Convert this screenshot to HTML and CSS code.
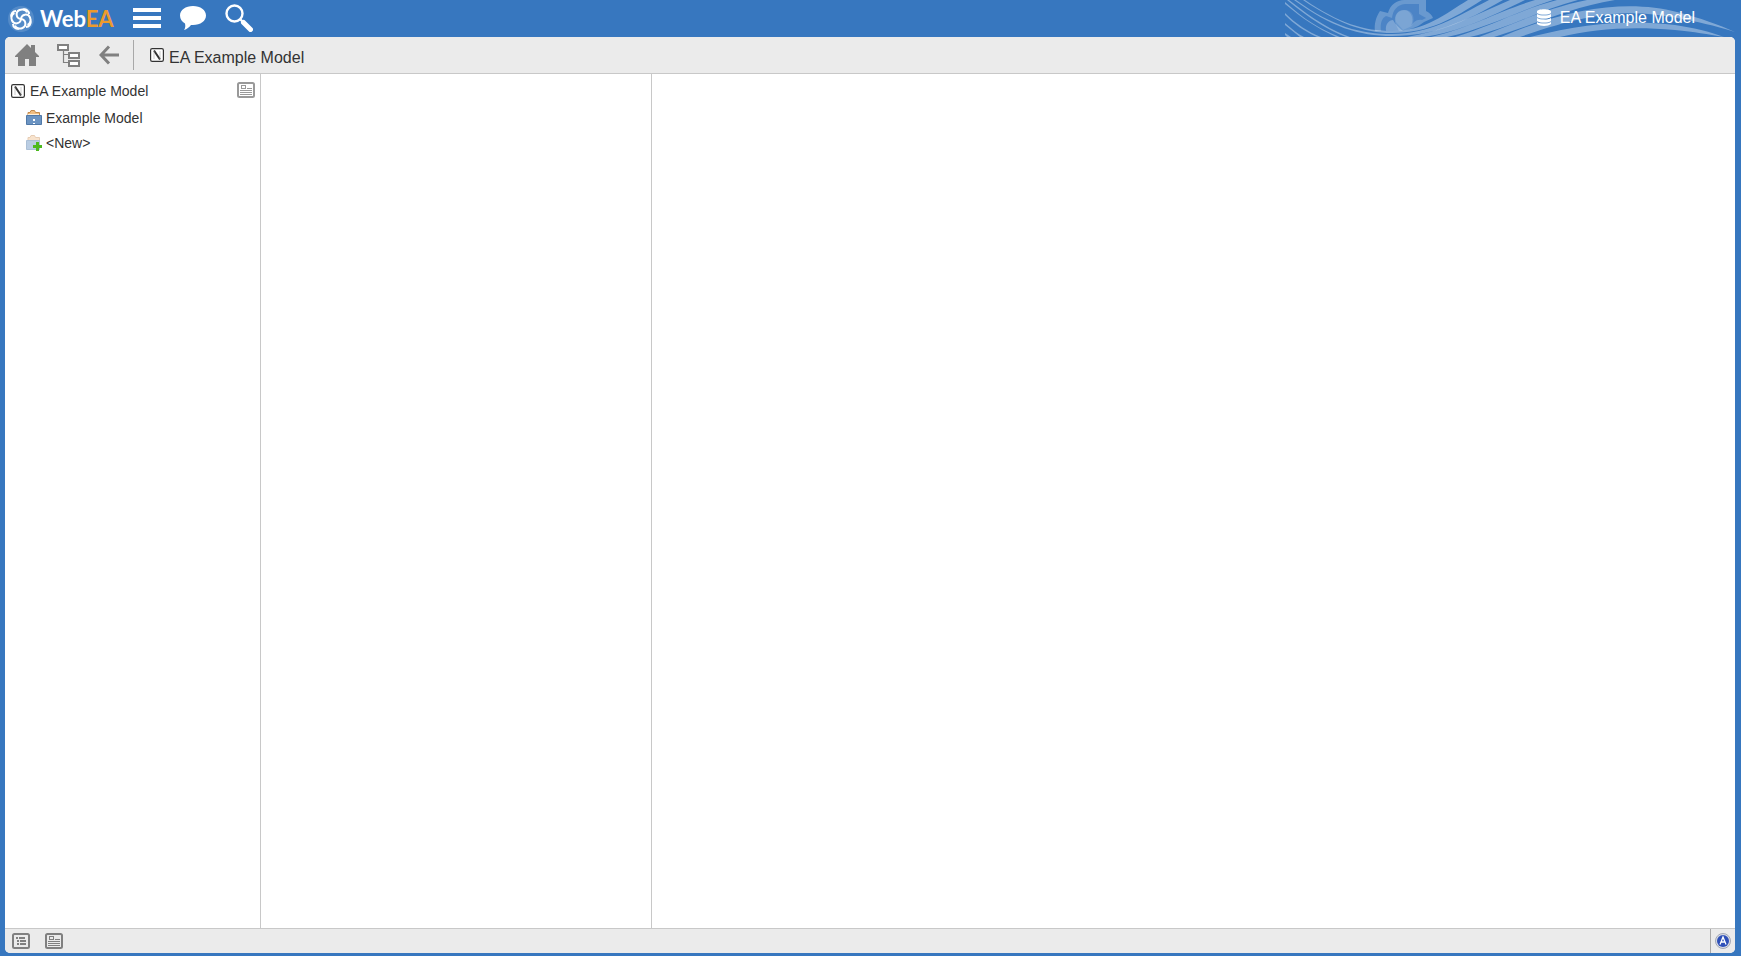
FILE: index.html
```html
<!DOCTYPE html>
<html lang="en">

<head>
    <meta charset="utf-8">
    <title>WebEA - EA Example Model</title>
    <link rel="stylesheet" href="styles.css">
</head>

<body>
    <!-- symbols shared by several parts of the page -->
    <svg class="symbols" aria-hidden="true">
        <symbol id="icon-root" viewBox="0 0 14 14">
            <rect x="0.6" y="0.6" width="12.8" height="12.8" rx="1.6" fill="#fff" stroke="#333" stroke-width="1.2" />
            <path d="M4 2.5L10 11.5" stroke="#333" stroke-width="2" />
            <path d="M4 3V11M10 11V3" stroke="#999" stroke-width="0.5" />
        </symbol>
        <symbol id="icon-props" viewBox="0 0 18 16">
            <rect x="1" y="1" width="16" height="14" rx="1.5" fill="none" stroke="currentColor" stroke-width="2" />
            <rect x="4.5" y="3.5" width="4" height="3" fill="none" stroke="currentColor" />
            <path d="M10 6.5H15M3 8.5H15M3 10.5H15M3 12.5H15" stroke="currentColor" />
        </symbol>
        <symbol id="logo-loop" viewBox="0 0 28 28" fill="none">
            <path d="M14 14C9 13.500 8 7 12.500 5C16 3.500 19 5 20 7.500" />
        </symbol>
    </svg>

    <header class="header">
        <a class="logo" href="#" aria-label="WebEA">
            <svg class="logo-mark" width="28" height="28" viewBox="0 0 28 28" fill="none" stroke="#fff" stroke-width="2">
                <circle cx="14" cy="14" r="13" fill="#fff" fill-opacity="0.15" stroke="none" />
                <use href="#logo-loop" width="28" height="28" />
                <use href="#logo-loop" width="28" height="28" transform="rotate(90 14 14)" />
                <use href="#logo-loop" width="28" height="28" transform="rotate(180 14 14)" />
                <use href="#logo-loop" width="28" height="28" transform="rotate(270 14 14)" />
                <path d="M9 6C6 6 3.500 9 4.500 12M22 9C22 6 19 3.500 16 4.500M19 22C22 22 24.500 19 23.500 16M6 19C6 22 9 24.500 12 23.500" />
            </svg>
            <span class="logo-text">Web<span class="logo-ea">EA</span></span>
        </a>
        <button class="header-button" type="button" aria-label="Menu">
            <svg width="28" height="20" viewBox="0 0 28 20"><path d="M0 2H28M0 10H28M0 18H28" stroke="#fff" stroke-width="4" /></svg>
        </button>
        <button class="header-button" type="button" aria-label="Reviews">
            <svg width="28" height="26" viewBox="0 0 28 26"><path d="M14 1C21.500 1 27 5 27 10.500C27 16 21.500 20 14 20L12 20C10 22.500 8 24 5 25C6.500 23 6.500 21 6 18.500C3 16.800 1 14 1 10.500C1 5 6.500 1 14 1Z" fill="#fff" /></svg>
        </button>
        <button class="header-button" type="button" aria-label="Search">
            <svg width="28" height="28" viewBox="0 0 28 28" fill="none" stroke="#fff"><circle cx="9.500" cy="9.500" r="8" stroke-width="2.400" /><path d="M15 15L18 18" stroke-width="2.400" /><path d="M18.500 18.500L25.500 25.500" stroke-width="5" stroke-linecap="round" /></svg>
        </button>

        <div class="banner">
            <svg class="banner-art" width="450" height="37" viewBox="0 0 450 37" aria-hidden="true">
                <g fill="#fff" fill-opacity="0.36">
                    <path fill-opacity="0.25" d="M90 31C89 24 91 17 95 11L103 13C105 5 112 0 119 0H141V11C145 13 147 15 148 18L139 22C132 28 122 31 107 31H96L90 31Z" />
                    <path fill="#3877c0" fill-opacity="0.6" d="M96 31C95 23 97 18 101 16L107 18C108 10 112 5 120 4H134V14L141 18L137 20C131 19 128 23 126 26C130 17 125 10 119 10C111 10 108 18 111 25L114 31Z" />
                    <path fill-opacity="0.25" d="M101 31C100 24 104 20 108 20C110 24 114 28 118 31Z" />
                    <path fill-opacity="0.12" d="M111 22C109 15 113 10 120 10C127 10 131 17 127 26L118 30Z" />
                    <path d="M20 0C54 23 79 31 107 31C140 31 160 14 183 0H197C168 19 143 33 107 33C79 33 52 23 18 0Z" />
                    <path d="M11 0C48 27 76 34 107 34C145 34 171 17 204 0H218C180 22 150 36 107 36C74 36 46 27 9 0Z" />
                    <path d="M4 0C29 20 48 31 65 37H61C43 30 25 19 2 0ZM122 37C159 31 188 16 225 0H240C205 17 175 32 138 37Z" />
                    <path d="M0 2C20 20 35 29 55 37H51C32 28 18 19 0 4ZM146 37C187 27 214 11 250 0H268C233 11 202 28 162 37Z" />
                    <path d="M0 13C11 24 23 32 36 37H32C19 31 9 24 0 15ZM170 37C207 26 234 10 272 0H293C257 9 223 29 185 37Z" />
                    <path d="M0 23C7 29 13 34 19 37H15L0 25ZM194 37C232 23 258 9 302 0H330C286 7 249 25 209 37Z" />
                    <path d="M0 33L6 37H2L0 35ZM216 37C292 4 349 1 392 12C415 18 435 25 450 32C428 25 413 22 392 18C343 9 307 12 235 37Z" />
                    <path d="M245 37C306 22 349 20 390 25C410 28 426 32 439 37C422 34 410 32 390 30C345 26 309 29 275 37Z" />
                </g>
            </svg>
            <div class="model">
                <svg width="16" height="17" viewBox="0 0 16 17" fill="#fff"><path d="M1 2.500C1 -0.500 15 -0.500 15 2.500V4C12 6 4 6 1 4ZM1 5C4 7 12 7 15 5V8C12 10 4 10 1 8ZM1 9C4 11 12 11 15 9V12C12 14 4 14 1 12ZM1 13C4 15 12 15 15 13V15C12 17.500 4 17.500 1 15Z" /></svg>
                <span>EA Example Model</span>
            </div>
        </div>
    </header>

    <div class="window">
        <nav class="toolbar">
            <button class="tool" type="button" aria-label="Home">
                <svg width="24" height="24" viewBox="0 0 24 24" fill="#808080"><path d="M12 1L16 5V2H20V9L24 13V14H21V23H14V16H10V23H3V14H0V13Z" /></svg>
            </button>
            <button class="tool" type="button" aria-label="Browser">
                <svg width="24" height="24" viewBox="0 0 24 24" fill="none" stroke="#808080"><path d="M6.500 8V19.500H11M6.500 11.500H11" stroke-width="1.200" /><g fill="#fff" stroke-width="2"><rect x="1" y="2" width="10" height="5" /><rect x="12" y="10" width="10" height="5" /><rect x="12" y="18" width="10" height="5" /></g></svg>
            </button>
            <button class="tool" type="button" aria-label="Back">
                <svg width="20" height="20" viewBox="0 0 20 20" fill="none" stroke="#808080" stroke-width="3"><path d="M20 10H2M10 1.500L2 10L10 18.500" /></svg>
            </button>
            <div class="path">
                <svg width="14" height="14"><use href="#icon-root" /></svg>
                <span>EA Example Model</span>
            </div>
        </nav>

        <main class="panes">
            <aside class="tree">
                <div class="tree-row tree-root">
                    <a href="#"><svg width="14" height="14"><use href="#icon-root" /></svg>EA Example Model</a>
                    <button class="tree-props" type="button" aria-label="Properties"><svg width="18" height="16"><use href="#icon-props" /></svg></button>
                </div>
                <div class="tree-row tree-child">
                    <a href="#">
                        <svg width="16" height="16" viewBox="0 0 16 16"><path d="M2 6V2.500H4L5 0.500H8.500L9.500 2.500H13.500V6Z" fill="#f0be82" stroke="#c58b4c" /><path d="M2 4.500H13" stroke="#fff0d8" /><path d="M0.500 5.500H15.500V14.500H0.500Z" fill="#6c94c2" stroke="#5079a8" /><path d="M7 9H9V11H7ZM7 13H9V14H7Z" fill="#fff" /></svg>Example Model</a>
                </div>
                <div class="tree-row tree-child">
                    <a href="#">
                        <svg width="16" height="16" viewBox="0 0 16 16"><path d="M2 6V2.500H4L5 0.500H8.500L9.500 2.500H13.500V6Z" fill="#f8e3cd" stroke="#e6cdb5" /><path d="M0.500 5.500H13.500V14.500H0.500Z" fill="#bacde3" stroke="#acc0d6" /><path d="M10 7H13V10H16V13H13V16H10V13H7V10H10Z" fill="#4cb91d" /></svg>&lt;New&gt;</a>
                </div>
            </aside>
            <section class="list"></section>
            <section class="content"></section>
        </main>

        <footer class="footer">
            <button class="foot-button" type="button" aria-label="List view">
                <svg width="18" height="16" viewBox="0 0 18 16" fill="none" stroke="currentColor"><rect x="1" y="1" width="16" height="14" rx="1.500" stroke-width="2" /><path d="M4 5H6M7 5H13M5 8H7M8 8H14M5 11H7M8 11H14" stroke-width="2" /></svg>
            </button>
            <button class="foot-button" type="button" aria-label="Properties view"><svg width="18" height="16"><use href="#icon-props" /></svg></button>
            <button class="account" type="button" aria-label="Account">
                <svg width="16" height="16" viewBox="0 0 16 16"><circle cx="8" cy="8" r="7.500" fill="#d9dce5" stroke="#a3a8b5" /><circle cx="8" cy="8" r="6" fill="#2e50b8" /><path d="M5 11.500L8 4L11 11.500M6 9H10" fill="none" stroke="#fff" stroke-width="1.300" /></svg>
            </button>
        </footer>
    </div>
</body>

</html>
```

FILE: styles.css
```css
html,
body {
    margin: 0;
    height: 100%;
}

body {
    display: flex;
    flex-direction: column;
    box-sizing: border-box;
    padding: 0 6px 3px 5px;
    background-color: #3777bf;
    color: #333;
    font-family: "Liberation Sans", Arial, sans-serif;
    font-size: 14px;
}

button {
    display: flex;
    padding: 0;
    border: 0;
    background: none;
    color: inherit;
    cursor: pointer;
}

a {
    color: inherit;
    text-decoration: none;
}

svg {
    display: block;
    flex: none;
}

.symbols {
    position: absolute;
    width: 0;
    height: 0;
}

/* header */
.header {
    display: flex;
    align-items: center;
    height: 37px;
    flex: none;
}

.logo {
    display: flex;
    align-items: center;
    width: 110px;
    margin-right: 18px;
    padding-left: 2px;
    box-sizing: border-box;
}

.logo-text {
    margin-left: 5px;
    color: #fff;
    font-family: Lato, sans-serif;
    font-size: 22px;
    font-weight: bold;
    line-height: 36px;
}

.logo-ea {
    color: #ec9b2d;
}

.header-button {
    margin-right: 18px;
    padding-bottom: 2px;
}

.banner {
    display: grid;
    margin-left: auto;
    height: 37px;
}

.banner-art,
.model {
    grid-area: 1 / 1;
}

.model {
    display: flex;
    align-items: center;
    justify-content: flex-end;
    gap: 8px;
    padding: 0 40px 2px 0;
    color: #fff;
    font-size: 16px;
}

/* main window */
.window {
    display: flex;
    flex-direction: column;
    flex: 1;
    overflow: hidden;
    border-radius: 5px;
    background-color: #fff;
}

.toolbar {
    display: flex;
    align-items: center;
    height: 36px;
    padding-left: 10px;
    border-bottom: 1px solid #c8c8c8;
    background-color: #ebebeb;
}

.tool {
    margin-right: 18px;
}

.tool:nth-child(3) {
    margin-right: 14px;
}

.path {
    display: flex;
    align-items: center;
    gap: 5px;
    height: 30px;
    padding-left: 16px;
    border-left: 1px solid #a8a8a8;
    font-size: 16px;
}

.path span {
    padding-top: 5px;
}

.panes {
    display: flex;
    flex: 1;
}

.tree {
    width: 256px;
    box-sizing: border-box;
    padding: 4px 5px 0 6px;
    border-right: 1px solid #c8c8c8;
}

.tree-row,
.tree-row a {
    display: flex;
    align-items: center;
}

.tree-row {
    height: 25px;
}

.tree-row a {
    gap: 5px;
}

.tree-root {
    justify-content: space-between;
    margin-bottom: 2px;
}

.tree-child {
    padding-left: 15px;
}

.tree-child a {
    gap: 4px;
}

.tree-props {
    margin-bottom: 2px;
    color: #999;
}

.list {
    width: 390px;
    border-right: 1px solid #c8c8c8;
}

.content {
    flex: 1;
}

.footer {
    display: flex;
    align-items: center;
    height: 24px;
    padding-left: 7px;
    border-top: 1px solid #c8c8c8;
    background-color: #ebebeb;
    color: #808080;
}

.foot-button {
    margin-right: 15px;
}

.account {
    align-items: center;
    height: 100%;
    margin-left: auto;
    padding: 0 4px;
    border-left: 1px solid #a8a8a8;
}
```
